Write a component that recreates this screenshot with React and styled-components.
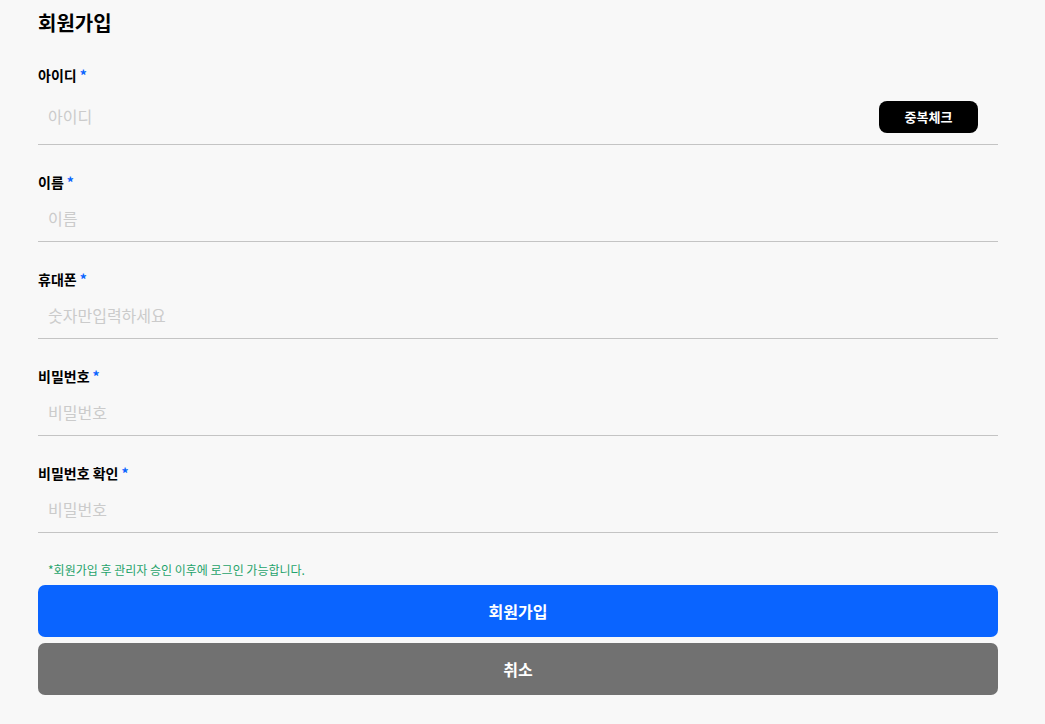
import React from "react";
import styled, { createGlobalStyle } from "styled-components";

const Global = createGlobalStyle`
  html, body { margin: 0; padding: 0; background: #f8f8f8; }
  body { font-family: "Noto Sans CJK KR", "Noto Sans", sans-serif; color: #000; }
  * { box-sizing: border-box; }
`;

const Page = styled.div`
  width: 960px;
  margin-left: 38px;
  padding-top: 9px;
  display: flex;
  flex-direction: column;
`;

const Title = styled.h1`
  margin: 0 0 28px;
  font-size: 20px;
  line-height: 28px;
  font-weight: 700;
`;

const Field = styled.div`
  display: flex;
  flex-direction: column;
  margin-bottom: 27px;
`;

const Label = styled.label`
  font-size: 14px;
  line-height: 20px;
  font-weight: 700;
  margin-bottom: 6px;
`;

const Star = styled.span`
  color: #0a64ff;
  margin-left: 3px;
`;

const Row = styled.div`
  display: flex;
  align-items: center;
  min-height: ${(p) => (p.$tall ? "54px" : "44px")};
  padding: ${(p) => (p.$tall ? "0 20px 0 0" : "0")};
  border-bottom: 1px solid #c4c4c4;
`;

const Input = styled.input`
  flex: 1;
  border: none;
  background: transparent;
  outline: none;
  font-family: inherit;
  font-size: 16px;
  padding: 0 10px 4px;
  height: 43px;
  color: #000;
  &::placeholder { color: #cbcbcb; }
`;

const CheckButton = styled.button`
  width: 99px;
  height: 32px;
  border: none;
  border-radius: 8px;
  background: #000;
  color: #fff;
  font-family: inherit;
  font-size: 13px;
  font-weight: 700;
  margin-bottom: 2px;
`;

const Notice = styled.p`
  margin: 1px 0 6px 10px;
  font-size: 12px;
  line-height: 18px;
  color: #1fa36b;
`;

const ActionButton = styled.button`
  width: 100%;
  height: 52px;
  border: none;
  border-radius: 7px;
  background: ${(p) => p.$bg};
  color: #fff;
  font-family: inherit;
  font-size: 16px;
  font-weight: 700;
  margin-bottom: 6px;
`;

const fields = [
  { label: "이름", placeholder: "이름", type: "text" },
  { label: "휴대폰", placeholder: "숫자만입력하세요", type: "text" },
  { label: "비밀번호", placeholder: "비밀번호", type: "password" },
  { label: "비밀번호 확인", placeholder: "비밀번호", type: "password" },
];

export default function App() {
  return (
    <>
      <Global />
      <Page>
        <Title>회원가입</Title>
        <Field>
          <Label>
            아이디<Star>*</Star>
          </Label>
          <Row $tall>
            <Input placeholder="아이디" />
            <CheckButton>중복체크</CheckButton>
          </Row>
        </Field>
        {fields.map((f) => (
          <Field key={f.label}>
            <Label>
              {f.label}
              <Star>*</Star>
            </Label>
            <Row>
              <Input type={f.type} placeholder={f.placeholder} />
            </Row>
          </Field>
        ))}
        <Notice>*회원가입 후 관리자 승인 이후에 로그인 가능합니다.</Notice>
        <ActionButton $bg="#0a64ff">회원가입</ActionButton>
        <ActionButton $bg="#717171">취소</ActionButton>
      </Page>
    </>
  );
}
